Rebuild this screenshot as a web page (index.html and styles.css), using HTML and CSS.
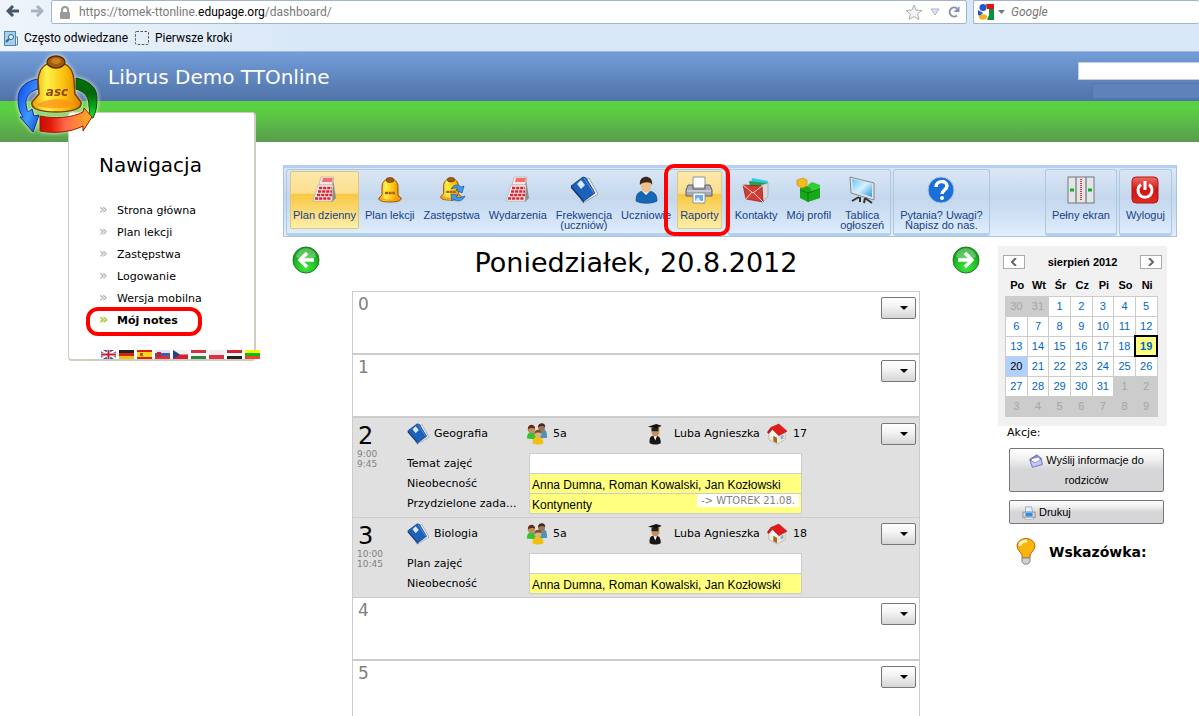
FILE: index.html
```html
<!DOCTYPE html>
<html lang="pl">
<head>
    <meta charset="UTF-8">
    <meta name="viewport" content="width=device-width, initial-scale=1.0">
    <title>Librus Demo TTOnline</title>
    <link rel="stylesheet" href="styles.css">
</head>
<body>

<!-- Shared icons -->
<svg class="defs" aria-hidden="true">
    <defs>
        <linearGradient id="gold" x1="0" x2="1" y1="0" y2="0">
            <stop offset="0" stop-color="#e89a00"/>
            <stop offset=".3" stop-color="#fff04a"/>
            <stop offset=".65" stop-color="#fbc10c"/>
            <stop offset="1" stop-color="#e07c00"/>
        </linearGradient>
        <linearGradient id="blueArrow" x1="0" x2="1" y1="0" y2="1">
            <stop offset="0" stop-color="#0a3fe8"/>
            <stop offset=".6" stop-color="#3f9aff"/>
            <stop offset="1" stop-color="#0b46c8"/>
        </linearGradient>
        <linearGradient id="redArrow" x1="0" x2="1" y1="0" y2="0">
            <stop offset="0" stop-color="#c80d00"/>
            <stop offset=".2" stop-color="#e01a08"/>
            <stop offset=".5" stop-color="#ff6a4a"/>
            <stop offset="1" stop-color="#ffb01e"/>
        </linearGradient>
        <linearGradient id="greenArrow" x1="0" x2="0" y1="0" y2="1">
            <stop offset="0" stop-color="#04700a"/>
            <stop offset=".4" stop-color="#04660a"/>
            <stop offset="1" stop-color="#19e22b"/>
        </linearGradient>
        <radialGradient id="greenBall" cx=".5" cy=".8" r=".8">
            <stop offset="0" stop-color="#3fe83f"/>
            <stop offset="1" stop-color="#06950d"/>
        </radialGradient>
        <linearGradient id="redBox" x1="0" x2="0" y1="0" y2="1">
            <stop offset="0" stop-color="#ef6a62"/>
            <stop offset=".5" stop-color="#cf1414"/>
            <stop offset="1" stop-color="#e22a22"/>
        </linearGradient>
        <linearGradient id="screen" x1="0" x2="1" y1="0" y2="1">
            <stop offset="0" stop-color="#6cc6f2"/>
            <stop offset=".5" stop-color="#d4f2ff"/>
            <stop offset="1" stop-color="#2f98d8"/>
        </linearGradient>
    </defs>
    <symbol id="i-calendar" viewBox="0 0 28 28">
        <path d="M22 3l3 19-4 4-3-2z" fill="#8d8d8d"/>
        <path d="M10 1h13l-2 8H8z" fill="#f8e4e2" stroke="#b9a5a3" stroke-width=".6"/>
        <path d="M12 2h10l-1 4H11z" fill="#f0706a"/>
        <path d="M7 9h15l-1 16H2z" fill="#f6f2f2" stroke="#aaa" stroke-width=".6"/>
        <path d="M8 12h13M7 15.500h14M6 19h15M4 22.500h16" stroke="#dc2430" stroke-width="2.600" stroke-dasharray="3.200 .9"/>
    </symbol>
    <symbol id="i-bell" viewBox="0 0 28 28">
        <path d="M6 19V11c0-5 3-8 8-8s8 3 8 8v8l3 3c1 2-2 4-11 4S2 24 3 22z" fill="url(#gold)" stroke="#9a5200"/>
        <ellipse cx="14" cy="4" rx="4" ry="2.500" fill="#a45a08" stroke="#6d3500" stroke-width=".7"/>
        <path d="M4 22c4 3 16 3 20 0" fill="none" stroke="#ff9a1c" stroke-width="1.500"/>
        <path d="M9 17h10" stroke="#a85c10" stroke-width="2.500" stroke-dasharray="3 .6"/>
    </symbol>
    <symbol id="i-book" viewBox="0 0 28 28">
        <path d="M17 3l2-1 9 16-15 9-2-3z" fill="#f4f6f8" stroke="#7d8ba0" stroke-width=".8"/>
        <path d="M13 1l3 1 9 15-11 8L1 10z" fill="#1b62ba" stroke="#0c3474" stroke-width=".8"/>
        <path d="M1 10l13 15v2L1 12z" fill="#0c3474"/>
        <path d="M7 8l4-4 4 5-4 4z" fill="#dbe8f8"/>
        <path d="M14 2l10 15" stroke="#5e9be4" stroke-width="1"/>
    </symbol>
    <symbol id="i-people" viewBox="0 0 24 24">
        <path d="M13 13c0-4 3-6 6-6s4 3 4 9l-7 1z" fill="#4f93b4"/>
        <circle cx="17" cy="5" r="3.800" fill="#a0724c"/>
        <path d="M13 5c0-6 8-6 8-1-3-1-5-1-8 1z" fill="#3d2a1c"/>
        <path d="M1 17c0-5 2-7 5-7s5 2 5 8z" fill="#35c22e"/>
        <circle cx="6" cy="7" r="4" fill="#c18c60"/>
        <path d="M2 7c0-7 8-6 8-1-3-1-5-1-8 1z" fill="#5b2d1a"/>
        <path d="M7 22c0-5 3-7 6-7s6 2 6 7c-3 2-9 2-12 0z" fill="#f0c010"/>
        <circle cx="13" cy="12" r="3.800" fill="#e0b080"/>
        <path d="M9 12c0-6 8-6 8-1-3-1-5-1-8 1z" fill="#7b4a28"/>
    </symbol>
    <symbol id="i-teacher" viewBox="0 0 24 24">
        <path d="M3 22c-1-5 1-8 4-8h3c4 0 5 4 5 8-3 2-9 2-12 0z" fill="#161616"/>
        <path d="M7 14l2 5 2-5z" fill="#fff"/>
        <path d="M5 6h8v5c0 5-7 5-8 0z" fill="#c98e60"/>
        <path d="M5 5h8v4H5z" fill="#222"/>
        <path d="M1 4l9-3 6 2-5 3z" fill="#111"/>
        <path d="M13 4v8" stroke="#c9a227"/>
    </symbol>
    <symbol id="i-house" viewBox="0 0 24 24">
        <path d="M3 10l8 4 10-5v9l-9 5-9-5z" fill="#ece8e0" stroke="#a8a49c" stroke-width=".6"/>
        <path d="M1 10l5-5 8 7-3 6z" fill="#f6f4ee"/>
        <path d="M5 5l9-4 9 8-9 5z" fill="#e11b1b" stroke="#a50e0e" stroke-width=".5"/>
        <path d="M1 10l4-5 2 2-4 5z" fill="#c81414"/>
        <path d="M8 14l4 2v6l-4-2z" fill="#a8681c"/>
        <path d="M16 14l3-1v4l-3 1z" fill="#7fb0d8"/>
    </symbol>
</svg>

<!-- Browser bars -->
<div class="browser">
    <div class="nav-bar">
        <button class="nav-arrow" aria-label="Wstecz">
            <svg width="14" height="12" viewBox="0 0 14 12"><path d="M7 1L2 6l5 5M2 6h11" fill="none" stroke="#46566b" stroke-width="3"/></svg>
        </button>
        <button class="nav-arrow" aria-label="Dalej">
            <svg width="14" height="12" viewBox="0 0 14 12"><path d="M7 1l5 5-5 5M12 6H1" fill="none" stroke="#a9b4c2" stroke-width="3"/></svg>
        </button>
        <div class="url-box">
            <svg width="12" height="13" viewBox="0 0 12 13"><path d="M3 6V4a3 3 0 0 1 6 0v2" fill="none" stroke="#999" stroke-width="2"/><rect x="1" y="6" width="10" height="7" rx="1" fill="#999"/></svg>
            <span class="url">https://tomek-ttonline.<b>edupage.org</b>/dashboard/</span>
            <svg width="16" height="16" viewBox="0 0 16 16"><path d="M8 1l2 5 6 .5-4.500 3.500 1.500 5.500L8 12.500 3 15.500 4.500 10 0 6.500 6 6z" fill="#f2f4f7" stroke="#a9afb8"/></svg>
            <svg width="10" height="8" viewBox="0 0 10 8"><path d="M1 1h8L5 7z" fill="#dbe4ef" stroke="#aab4c2"/></svg>
            <svg width="12" height="12" viewBox="0 0 12 12"><path d="M9 9.500A4.500 4.500 0 1 1 9 2.500" fill="none" stroke="#8594a6" stroke-width="2"/><path d="M11.500 0v6h-6z" fill="#8594a6"/></svg>
        </div>
        <div class="search-box">
            <svg width="16" height="16" viewBox="0 0 16 16"><path d="M8 0h8v5H9z" fill="#e8140c"/><path d="M11 5h5v11h-7l2-5z" fill="#0c8f3a"/><circle cx="5" cy="3.500" r="3.500" fill="#2158d0"/><path d="M0 6l5 3-3 3-2-1z" fill="#2158d0"/><ellipse cx="5" cy="13" rx="4" ry="2.800" fill="#f0b020"/></svg>
            <svg width="7" height="4" viewBox="0 0 7 4"><path d="M0 0h7L3.500 4z" fill="#777"/></svg>
            <input type="text" placeholder="Google" aria-label="Szukaj w Google">
        </div>
    </div>
    <div class="bookmarks">
        <a href="#"><svg width="14" height="15" viewBox="0 0 14 15"><rect x=".5" y=".5" width="11" height="14" fill="#a8d0ea" stroke="#4f87b0"/><path d="M12 6h1.500v8H12" fill="none" stroke="#4f87b0"/><circle cx="7" cy="6" r="2.500" fill="#dff" stroke="#2f6490"/><path d="M5 8l-3 3" stroke="#2f6490" stroke-width="2"/></svg>Często odwiedzane</a>
        <a href="#"><svg width="14" height="14" viewBox="0 0 14 14"><rect x=".5" y=".5" width="13" height="13" rx="1" fill="none" stroke="#555" stroke-dasharray="2.500 1.500"/></svg>Pierwsze kroki</a>
    </div>
</div>

<header class="header">
    <svg class="logo" viewBox="0 0 85 86" aria-hidden="true">
        <path d="M23 27C10 29 3 37 3 47c0 8 2 14 5 18l-3 0 13 15 6-17-5 1-2-7c-3 3-5 3-5 0-3-9 0-17 11-20z" fill="url(#blueArrow)" stroke="#0b2f9a"/>
        <path d="M61 26c14 3 21 10 21 20 0 8-1 14-4 20l-4-1c0-4 1-8 0-11 0-9-4-14-13-17z" fill="url(#greenArrow)" stroke="#06480a"/>
        <path d="M25 64c14 3 32 2 43-4l1-4 8 9-9 14v-5c-12 6-28 8-43 5z" fill="url(#redArrow)" stroke="#9a1800"/>
        <path d="M24 42l-1-14c1-12 8-18 18-18s17 6 18 18l1 14 6 8c2 7-10 10-25 10s-26-3-24-10z" fill="url(#gold)" stroke="#7a3f00" stroke-width="1.500"/>
        <path d="M22 53c10 5 30 4 38-1-8-7-30-6-38 1z" fill="#ff8c1a" opacity=".7"/>
        <ellipse cx="41" cy="10" rx="9" ry="6" fill="#a45a08" stroke="#5d2c00" stroke-width="1.500"/>
        <ellipse cx="41" cy="9" rx="5" ry="3" fill="#c98020"/>
        <text x="42" y="44" text-anchor="middle" class="logo-text">asc</text>
    </svg>
    <div class="title-bar">
        <h1>Librus Demo TTOnline</h1>
        <div class="header-search">
            <input type="text" aria-label="Szukaj">
            <div class="header-menu"></div>
        </div>
    </div>
    <div class="green-bar"></div>
</header>

<div class="page">
    <nav class="sidebar">
        <h2>Nawigacja</h2>
        <ul>
            <li><a href="#">Strona główna</a></li>
            <li><a href="#">Plan lekcji</a></li>
            <li><a href="#">Zastępstwa</a></li>
            <li><a href="#">Logowanie</a></li>
            <li><a href="#">Wersja mobilna</a></li>
            <li class="current"><a href="#">Mój notes</a></li>
        </ul>
        <div class="flags">
            <svg viewBox="0 0 15 9"><path fill="#23408f" d="M0 0h15v9H0z"/><path d="M0 0l15 9M15 0L0 9" stroke="#fff" stroke-width="2"/><path d="M7.500 0v9M0 4.500h15" stroke="#fff" stroke-width="3.500"/><path d="M7.500 0v9M0 4.500h15" stroke="#d01c2c" stroke-width="2"/></svg>
            <svg viewBox="0 0 15 9"><path fill="#222" d="M0 0h15v3H0z"/><path fill="#d8200c" d="M0 3h15v3H0z"/><path fill="#f4c010" d="M0 6h15v3H0z"/></svg>
            <svg viewBox="0 0 15 9"><path fill="#d8200c" d="M0 0h15v9H0z"/><path fill="#fbd616" d="M0 2h15v5H0z"/><path fill="#b05a1c" d="M3 3h3v3H3z"/></svg>
            <svg viewBox="0 0 15 9"><path fill="#e4e4ea" d="M0 0h15v3H0z"/><path fill="#3a5db0" d="M0 3h15v3H0z"/><path fill="#d8303c" d="M0 6h15v3H0z"/><path fill="#c82030" d="M2 2h4v5H2z"/></svg>
            <svg viewBox="0 0 15 9"><path fill="#f0f0f0" d="M0 0h15v5H0z"/><path fill="#d8202c" d="M0 4.500h15V9H0z"/><path fill="#23408f" d="M0 0l7 4.500L0 9z"/></svg>
            <svg viewBox="0 0 15 9"><path fill="#d8303c" d="M0 0h15v3H0z"/><path fill="#f4f4f4" d="M0 3h15v3H0z"/><path fill="#2c8444" d="M0 6h15v3H0z"/></svg>
            <svg viewBox="0 0 15 9"><path fill="#eee" d="M0 0h15v5H0z"/><path fill="#dc3244" d="M0 5h15v4H0z"/></svg>
            <svg viewBox="0 0 15 9"><path fill="#d8202c" d="M0 0h15v3H0z"/><path fill="#f4f4f4" d="M0 3h15v3H0z"/><path fill="#222" d="M0 6h15v3H0z"/></svg>
            <svg viewBox="0 0 15 9"><path fill="#f6f600" d="M0 0h15v3H0z"/><path fill="#14b814" d="M0 3h15v3H0z"/><path fill="#e84830" d="M0 6h15v3H0z"/></svg>
        </div>
    </nav>

    <main class="main">
        <div class="toolbar">
            <div class="group">
                <button class="tool active"><svg><use href="#i-calendar"/></svg>Plan dzienny</button>
                <button class="tool"><svg><use href="#i-bell"/></svg>Plan lekcji</button>
                <button class="tool"><svg viewBox="0 0 28 28"><use href="#i-bell" width="26" height="26"/><path d="M13 13c3-5 8-5 10-2l3-1-2 7-6-3 2-1c-2-2-4-1-7 0zM27 20c-3 6-8 6-11 3l-2 2-1-7 7 1-2 2c3 2 5 0 9-1z" fill="#3f9af0" stroke="#1456a8" stroke-width=".7"/></svg>Zastępstwa</button>
                <button class="tool"><svg><use href="#i-calendar"/></svg>Wydarzenia</button>
                <button class="tool"><svg><use href="#i-book"/></svg>Frekwencja<br>(uczniów)</button>
                <button class="tool"><svg viewBox="0 0 28 28"><path d="M4 25c0-8 3-10 10-10s11 2 11 10c-5 3-16 3-21 0z" fill="#1767b5" stroke="#0b4687" stroke-width=".7"/><path d="M10 15l4 4 4-4z" fill="#fff"/><path d="M9 5h10v5c0 9-9 9-10 0z" fill="#eec08c"/><path d="M8 9C6-2 22-2 20 9c-1-4-10-3-12 0z" fill="#3a2818"/></svg>Uczniowie</button>
                <button class="tool active marked"><svg viewBox="0 0 28 28"><path d="M8 1h12v11H8z" fill="#fafcff" stroke="#8a96a4"/><path d="M3 9h5v4h12V9h5l2 5v6H1v-6z" fill="#a9abb2" stroke="#5c606a"/><path d="M2 15h24" stroke="#e6e8ec"/><path d="M8 17h12v10H8z" fill="#fff" stroke="#8a96a4"/><path d="M10 19h8v6h-8z" fill="#6aaae8"/><path d="M10 25l3-4 3 4z" fill="#dcebfa"/></svg>Raporty</button>
            </div>
            <div class="group">
                <button class="tool"><svg viewBox="0 0 28 28"><path d="M10 2l16 3-1 6-16-4z" fill="#36c8e8"/><path d="M7 5l18 2v12L9 16z" fill="#1fa64a"/><path d="M19 9l7-2v13l-5 6z" fill="#d8dadc" stroke="#888" stroke-width=".5"/><path d="M1 9l19 1 1 16-17-3z" fill="#d43a32" stroke="#9a1812" stroke-width=".7"/><path d="M1 9l10 8 9-7M4 23l6-7M21 26l-9-9" fill="none" stroke="#fbd8d4"/></svg>Kontakty</button>
                <button class="tool"><svg viewBox="0 0 28 28"><path d="M5 12l7-2 13 3v9l-12 4-8-4z" fill="#18a818"/><path d="M13 9l4-3 8 3v5l-8 2z" fill="#34cc34"/><path d="M5 14l8 3 12-4M13 17v9" fill="none" stroke="#0b7a10"/><path d="M2 4l6-2 4 2v6l-5 2-5-3z" fill="#f4bc18" stroke="#c48808" stroke-width=".6"/></svg>Mój profil</button>
                <button class="tool"><svg viewBox="0 0 28 28"><path d="M2 1l24 6v17L3 17z" fill="#dfe4ea" stroke="#7d8894"/><path d="M4 3l20 5v13L5 15z" fill="url(#screen)"/><path d="M11 21l-7 4M12 21v5M17 22l-1 5M17 22l7 5" stroke="#333" stroke-width="2"/></svg>Tablica<br>ogłoszeń</button>
            </div>
            <div class="group">
                <button class="tool"><svg viewBox="0 0 28 28"><circle cx="14" cy="14" r="13" fill="#1c6fd6" stroke="#a8c8ee"/><path d="M9 11c0-7 11-7 11-1 0 4-5 4-5 8" fill="none" stroke="#fff" stroke-width="3.500"/><circle cx="15" cy="22" r="2" fill="#fff"/></svg>Pytania? Uwagi?<br>Napisz do nas.</button>
            </div>
            <div class="group fullscreen">
                <button class="tool"><svg viewBox="0 0 28 28"><rect x="1" y="1" width="26" height="26" fill="#e3e6e8" stroke="#777"/><path d="M9 1v26M19 1v26" stroke="#888" stroke-width="1.500"/><path d="M14 3v22" stroke="#e0303c" stroke-width="2" stroke-dasharray="1 1"/><path d="M3 14h4M21 14h4" stroke="#14b024" stroke-width="3"/></svg>Pełny ekran</button>
            </div>
            <div class="group">
                <button class="tool"><svg viewBox="0 0 28 28"><rect x="1" y="1" width="26" height="26" rx="4" fill="url(#redBox)" stroke="#b01818"/><path d="M10 8.500a7 7 0 1 0 8 0M14 5v9" fill="none" stroke="#fff" stroke-width="3"/></svg>Wyloguj</button>
            </div>
        </div>

        <div class="columns">
            <section class="day">
                <div class="day-head">
                    <button class="day-arrow" aria-label="Poprzedni dzień"><svg viewBox="0 0 28 28"><circle cx="14" cy="14" r="13" fill="url(#greenBall)" stroke="#1d7a24"/><path d="M4 11a10 9 0 0 1 20 0c-6 3-14 3-20 0z" fill="#fff" opacity=".3"/><path d="M15 7l-7 7 7 7M9 14h13" fill="none" stroke="#fff" stroke-width="3.500"/></svg></button>
                    <h2>Poniedziałek, 20.8.2012</h2>
                    <button class="day-arrow" aria-label="Następny dzień"><svg viewBox="0 0 28 28"><circle cx="14" cy="14" r="13" fill="url(#greenBall)" stroke="#1d7a24"/><path d="M4 11a10 9 0 0 1 20 0c-6 3-14 3-20 0z" fill="#fff" opacity=".3"/><path d="M13 7l7 7-7 7M19 14H6" fill="none" stroke="#fff" stroke-width="3.500"/></svg></button>
                </div>

                <div class="lessons">
                    <div class="lesson">
                        <div class="number">0</div>
                        <div></div>
                        <button class="menu-button" aria-label="Menu lekcji 0"></button>
                    </div>
                    <div class="lesson">
                        <div class="number">1</div>
                        <div></div>
                        <button class="menu-button" aria-label="Menu lekcji 1"></button>
                    </div>
                    <div class="lesson full">
                        <div class="number">2<small>9:00<br>9:45</small></div>
                        <div class="details">
                            <div class="info">
                                <span><svg><use href="#i-book"/></svg>Geografia</span>
                                <span><svg><use href="#i-people"/></svg>5a</span>
                                <span><svg><use href="#i-teacher"/></svg>Luba Agnieszka</span>
                                <span><svg><use href="#i-house"/></svg>17</span>
                            </div>
                            <div class="fields">
                                <label for="topic2">Temat zajęć</label>
                                <input id="topic2" type="text">
                                <label for="absent2">Nieobecność</label>
                                <input id="absent2" class="filled" type="text" value="Anna Dumna, Roman Kowalski, Jan Kozłowski">
                                <label for="task2">Przydzielone zada...</label>
                                <div class="task">
                                    <input id="task2" class="filled" type="text" value="Kontynenty">
                                    <span class="due">-&gt; WTOREK 21.08.</span>
                                </div>
                            </div>
                        </div>
                        <button class="menu-button" aria-label="Menu lekcji 2"></button>
                    </div>
                    <div class="lesson full">
                        <div class="number">3<small>10:00<br>10:45</small></div>
                        <div class="details">
                            <div class="info">
                                <span><svg><use href="#i-book"/></svg>Biologia</span>
                                <span><svg><use href="#i-people"/></svg>5a</span>
                                <span><svg><use href="#i-teacher"/></svg>Luba Agnieszka</span>
                                <span><svg><use href="#i-house"/></svg>18</span>
                            </div>
                            <div class="fields">
                                <label for="topic3">Plan zajęć</label>
                                <input id="topic3" type="text">
                                <label for="absent3">Nieobecność</label>
                                <input id="absent3" class="filled" type="text" value="Anna Dumna, Roman Kowalski, Jan Kozłowski">
                            </div>
                        </div>
                        <button class="menu-button" aria-label="Menu lekcji 3"></button>
                    </div>
                    <div class="lesson">
                        <div class="number">4</div>
                        <div></div>
                        <button class="menu-button" aria-label="Menu lekcji 4"></button>
                    </div>
                    <div class="lesson">
                        <div class="number">5</div>
                        <div></div>
                        <button class="menu-button" aria-label="Menu lekcji 5"></button>
                    </div>
                </div>
            </section>

            <aside class="side">
                <div class="calendar">
                    <div class="month">
                        <button aria-label="Poprzedni miesiąc"><svg width="6" height="8" viewBox="0 0 6 8"><path d="M5 0L1 4l4 4" fill="none" stroke="#666" stroke-width="2"/></svg></button>
                        <b>sierpień 2012</b>
                        <button aria-label="Następny miesiąc"><svg width="6" height="8" viewBox="0 0 6 8"><path d="M1 0l4 4-4 4" fill="none" stroke="#666" stroke-width="2"/></svg></button>
                    </div>
                    <table>
                        <thead>
                            <tr><th>Po</th><th>Wt</th><th>Śr</th><th>Cz</th><th>Pi</th><th>So</th><th>Ni</th></tr>
                        </thead>
                        <tbody>
                            <tr><td class="off">30</td><td class="off">31</td><td>1</td><td>2</td><td>3</td><td>4</td><td>5</td></tr>
                            <tr><td>6</td><td>7</td><td>8</td><td>9</td><td>10</td><td>11</td><td>12</td></tr>
                            <tr><td>13</td><td>14</td><td>15</td><td>16</td><td>17</td><td>18</td><td class="today">19</td></tr>
                            <tr><td class="selected">20</td><td>21</td><td>22</td><td>23</td><td>24</td><td>25</td><td>26</td></tr>
                            <tr><td>27</td><td>28</td><td>29</td><td>30</td><td>31</td><td class="off">1</td><td class="off">2</td></tr>
                            <tr><td class="off">3</td><td class="off">4</td><td class="off">5</td><td class="off">6</td><td class="off">7</td><td class="off">8</td><td class="off">9</td></tr>
                        </tbody>
                    </table>
                </div>
                <div class="actions">
                    <p>Akcje:</p>
                    <button class="action"><svg viewBox="0 0 16 16"><path d="M1 6l8-5 5 4 1 7-11 3z" fill="#8a8ed8" stroke="#5a5eb0"/><path d="M3 6l8-2 2 4-8 3z" fill="#fff"/><path d="M1 7l6 3 7-4 1 6-11 3z" fill="#c4c8f4" stroke="#6a6ec0" stroke-width=".7"/></svg>Wyślij informacje do rodziców</button>
                    <button class="action print"><svg viewBox="0 0 16 16"><path d="M4 1h7l1 6H4z" fill="#e4f2fc" stroke="#8ab"/><path d="M1 7h14v6H1z" fill="#d4d8dc" stroke="#889"/><path d="M4 8h8v4H4z" fill="#2a90e4"/><path d="M3 13h10v2H3z" fill="#fff" stroke="#889" stroke-width=".6"/></svg>Drukuj</button>
                </div>
                <div class="hint">
                    <svg width="20" height="27" viewBox="0 0 20 27"><path d="M6 17C5 14 1 12 1 8a9 7.500 0 0 1 18 0c0 4-4 6-5 9v3H6z" fill="#fbb40c" stroke="#b06a08"/><path d="M4 8c0-4 4-5 7-5" fill="none" stroke="#fff6b0" stroke-width="3"/><path d="M6 20h8v4l-2 2H8l-2-2z" fill="#d0d0d6" stroke="#888"/></svg>
                    <b>Wskazówka:</b>
                </div>
            </aside>
        </div>
    </main>
</div>

</body>
</html>
```

FILE: styles.css
```css
* {
    box-sizing: border-box;
}

body {
    margin: 0;
    background-color: #fff;
    color: #000;
    font-family: "DejaVu Sans", Verdana, sans-serif;
    font-size: 11px;
    overflow-x: hidden;
}

button, input {
    font-family: inherit;
    font-size: inherit;
    margin: 0;
}

button {
    cursor: pointer;
}

a {
    color: inherit;
    text-decoration: none;
}

.defs {
    position: absolute;
    width: 0;
    height: 0;
}

/* Browser bars */
.browser {
    height: 52px;
    background: linear-gradient(to right, #eef4fb, #d9e8f8 25%);
    border-bottom: 1px solid #a3b8cf;
    font-family: Roboto, "Segoe UI", sans-serif;
    font-size: 12px;
}

.nav-bar {
    display: flex;
    height: 24px;
}

.nav-arrow {
    width: 24px;
    padding: 0 0 0 2px;
    border: none;
    background: none;
}

.url-box, .search-box {
    display: flex;
    align-items: center;
    background-color: #fff;
    border: 1px solid #a3b5cc;
    border-radius: 2px;
}

.url-box {
    flex: 1;
    gap: 8px;
    margin-left: 3px;
    padding: 0 6px 0 7px;
}

.url {
    flex: 1;
    color: #7a7a7a;
}

.url b {
    color: #000;
    font-weight: normal;
}

.search-box {
    width: 226px;
    margin-left: 6px;
    padding-left: 4px;
    gap: 4px;
    border-right: none;
}

.search-box input {
    width: 150px;
    border: none;
    font-style: italic;
}

.search-box input::placeholder {
    color: #777;
}

.bookmarks {
    display: flex;
    gap: 7px;
    padding: 6px 4px;
}

.bookmarks a {
    display: flex;
    align-items: center;
    gap: 6px;
    line-height: 16px;
}

/* Header */
.header {
    position: relative;
}

.title-bar {
    display: flex;
    justify-content: space-between;
    height: 49px;
    padding-left: 108px;
    background: linear-gradient(#739dd9, #4f72a8);
}

.title-bar h1 {
    margin: 0;
    color: #fff;
    font-size: 20px;
    font-weight: normal;
    line-height: 51px;
}

.green-bar {
    height: 41px;
    background: linear-gradient(#5ad043 20%, #5a9c4e);
}

.header-search {
    display: flex;
    flex-direction: column;
    align-items: flex-end;
    gap: 3px;
    padding-top: 10px;
}

.header-search input {
    width: 121px;
    height: 18px;
    border: 1px solid #c5cfdf;
    border-right: none;
}

.header-menu {
    width: 107px;
    height: 16px;
    background-color: #6082ba;
    border: 1px solid #5476ae;
    border-right: none;
}

.logo {
    position: absolute;
    left: 15px;
    top: 0;
    width: 85px;
    height: 86px;
    z-index: 2;
    filter: drop-shadow(0 0 2px #fffde0);
}

.logo-text {
    fill: #8a4a10;
    font-size: 12px;
    font-style: italic;
    font-weight: bold;
}

/* Page */
.page {
    display: flex;
    align-items: flex-start;
    padding: 0 22px 0 68px;
}

.sidebar {
    position: relative;
    width: 188px;
    margin-top: -30px;
    padding: 38px 0 0 30px;
    background-color: #fff;
    border: 1px solid #cfccc2;
    border-width: 1px 2px 2px 1px;
    border-radius: 4px;
}

.sidebar h2 {
    margin: 0 0 19px;
    font-size: 20px;
    font-weight: normal;
    line-height: 28px;
}

.sidebar ul {
    list-style: none;
    margin: 0;
    padding: 0;
}

.sidebar li {
    position: relative;
    height: 22px;
    line-height: 22px;
}

.sidebar li::before {
    content: "»";
    display: inline-block;
    width: 18px;
    color: #aaa;
    font-size: 14px;
}

.sidebar .current {
    font-weight: bold;
}

.sidebar .current::before {
    color: #a5c32a;
}

/* Red marks round the chosen items */
.current::after, .marked::after {
    content: "";
    position: absolute;
    border: 4px solid #f00;
    pointer-events: none;
}

.current::after {
    left: -13px;
    top: -1px;
    width: 108px;
    height: 21px;
    border-radius: 12px;
}

.marked::after {
    top: -8px;
    bottom: -8px;
    left: -14px;
    right: -9px;
    border-radius: 10px;
    z-index: 3;
}

.flags {
    display: flex;
    gap: 3px;
    width: 160px;
    margin: 20px 0 0 2px;
}

.flags svg {
    flex: none;
    width: 15px;
    height: 9px;
}

.main {
    flex: 1;
    margin: 23px 0 0 27px;
}

/* Toolbar */
.toolbar {
    display: flex;
    gap: 2px;
    height: 72px;
    padding: 1px 4px 0 2px;
    background: linear-gradient(#dbe7f6, #c4d7ed 45%, #d2e3f6 75%, #e2f0fd);
    border: 1px solid #a6c3e6;
    border-top: 3px solid #b4cff2;
    font-family: "Liberation Sans", Arial, sans-serif;
}

.group {
    display: flex;
    gap: 3px;
    padding: 1px 3px 4px;
    border: 1px solid #afc8e2;
    border-bottom: 3px solid #b4cfea;
    border-radius: 3px;
}

.tool {
    position: relative;
    display: flex;
    flex-direction: column;
    align-items: center;
    padding: 4px 2px 0;
    border: 1px solid transparent;
    background: none;
    color: #15428b;
    line-height: 10px;
    white-space: nowrap;
}

.tool svg {
    flex: none;
    width: 28px;
    height: 28px;
    margin-bottom: 6px;
}

.tool.active {
    background: linear-gradient(#fbe8ab, #fbdf8d 38%, #f9c840 40%, #fbdd80 75%, #fdf0a8);
    border-color: #dcc684;
    border-radius: 2px;
}

.fullscreen {
    margin-left: auto;
}

/* Day plan */
.columns {
    display: flex;
    align-items: flex-start;
    gap: 18px;
    padding: 9px 10px 0 9px;
}

.day {
    flex: 1;
}

.day-head {
    display: flex;
    justify-content: space-between;
    align-items: flex-start;
    height: 45px;
}

.day-head h2 {
    margin: 0;
    font-size: 27px;
    font-weight: normal;
    line-height: 34px;
}

.day-arrow {
    width: 28px;
    height: 28px;
    padding: 0;
    border: none;
    background: none;
}

.lessons {
    margin: 0 60px;
    border: 1px solid #ccc;
}

.lesson {
    display: grid;
    grid-template-columns: 53px 1fr 35px;
    min-height: 63px;
    padding: 5px 3px 0 0;
    border-bottom: 2px solid #ccc;
}

.lesson.full {
    padding-bottom: 4px;
    background-color: #e0e0e0;
    border-bottom-width: 1px;
}

.number {
    padding-left: 5px;
    color: #808080;
    font-size: 17px;
    line-height: 14px;
}

.full .number {
    color: #000;
    font-size: 24px;
    line-height: 26px;
}

.number small {
    display: block;
    margin-left: -1px;
    color: #808080;
    font-size: 9px;
    line-height: 10px;
}

.menu-button {
    height: 22px;
    padding: 0;
    border: 1px solid #777;
    border-radius: 2px;
    background: linear-gradient(#fff, #f4f4f4 40%, #d5d5d8);
}

.menu-button::after {
    content: "";
    display: block;
    width: 0;
    margin-left: 18px;
    border: 4px solid transparent;
    border-top-color: #000;
    border-bottom: none;
}

.info {
    display: grid;
    grid-template-columns: 119px 121px 119px 1fr;
    height: 30px;
    padding-left: 1px;
}

.info span {
    display: flex;
    align-items: flex-start;
    gap: 5px;
    line-height: 21px;
    white-space: nowrap;
}

.info svg {
    width: 22px;
    height: 22px;
}

.fields {
    display: grid;
    grid-template-columns: 122px 273px;
    padding-left: 1px;
    line-height: 22px;
}

.fields label {
    height: 20px;
}

.fields input {
    display: block;
    width: 100%;
    height: 21px;
    margin-bottom: -1px;
    padding: 2px 2px 0;
    border: 1px solid #ccc;
    background-color: #fff;
    font-family: "Liberation Sans", Arial, sans-serif;
    font-size: 12px;
}

.fields .filled {
    background-color: #ffff80;
}

.task {
    position: relative;
}

.due {
    position: absolute;
    top: 1px;
    right: 3px;
    padding: 0 4px;
    background-color: #fff;
    color: #808080;
    font-size: 10px;
    line-height: 13px;
}

/* Calendar */
.side {
    width: 169px;
}

.calendar {
    height: 180px;
    padding: 8px 5px;
    background-color: #f1f1f1;
    font-family: "Liberation Sans", Arial, sans-serif;
}

.month {
    display: flex;
    justify-content: space-between;
    align-items: center;
    height: 16px;
}

.month button {
    width: 22px;
    height: 14px;
    padding: 0;
    border: 1px solid #aaa;
    background-color: #fff;
    line-height: 8px;
}

.calendar table {
    width: 153px;
    margin-left: 2px;
    border-collapse: collapse;
    table-layout: fixed;
}

.calendar th {
    height: 26px;
    padding: 4px 0 0 2px;
}

.calendar td {
    height: 20px;
    padding: 0;
    border: 1px solid #ccc;
    background-color: #fff;
    color: #06c;
    text-align: center;
}

.calendar .off {
    background-color: #ccc;
    color: #a5a5a5;
}

.calendar .today {
    border: 2px solid #000;
    background-color: #ffff80;
    font-weight: bold;
}

.calendar .selected {
    background-color: #b0d0ff;
    color: #000;
}

/* Actions */
.actions {
    padding: 0 3px 0 11px;
}

.actions p {
    margin: 0 0 0 -2px;
    line-height: 14px;
}

.action {
    display: block;
    width: 100%;
    height: 44px;
    margin: 8px 0;
    padding: 0 12px;
    border: 1px solid #777;
    border-radius: 2px;
    background: linear-gradient(#fff, #f0f0f0 25%, #d6d6d8 50%);
    color: #000;
    font-family: "Liberation Sans", Arial, sans-serif;
    line-height: 20px;
}

.action svg {
    width: 14px;
    height: 14px;
    margin-right: 3px;
    vertical-align: middle;
}

.action.print {
    height: 24px;
    text-align: left;
}

.hint {
    display: flex;
    align-items: center;
    gap: 13px;
    margin: 14px 0 0 18px;
    font-size: 14px;
}
```
